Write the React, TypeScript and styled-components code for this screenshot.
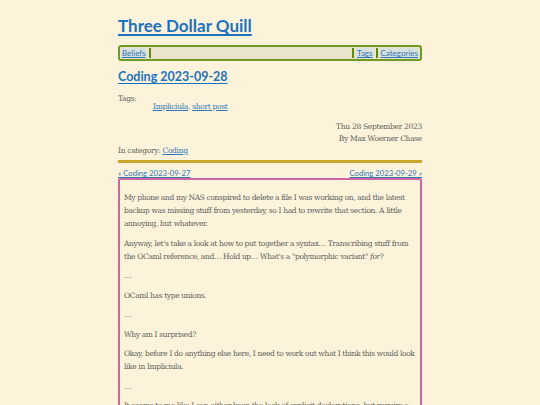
import React from "react";
import styled, { createGlobalStyle } from "styled-components";

const GlobalStyle = createGlobalStyle`
  html, body {
    margin: 0;
    padding: 0;
    background: #fcf3da;
  }
  body {
    font-family: "DejaVu Serif", serif;
    color: #5e5e5e;
  }
`;

const Page = styled.div`
  width: 304px;
  margin: 0 auto;
  padding-top: 15px;
`;

const SiteTitle = styled.a`
  display: inline-block;
  font-family: "Lato", "Open Sans", sans-serif;
  font-weight: 700;
  font-size: 17px;
  line-height: 22px;
  color: #1c72bd;
  text-decoration: underline;
  text-decoration-thickness: 1.5px;
  text-underline-offset: 2px;
`;

const Nav = styled.nav`
  margin-top: 8px;
  display: flex;
  align-items: center;
  height: 12px;
  padding: 0 1px;
  border: 2px solid #6e9c22;
  border-radius: 3px;
  background: #ebe4cc;
`;

const NavLink = styled.a`
  font-family: "Lato", sans-serif;
  font-size: 8px;
  line-height: 10px;
  padding: 0 1px;
  color: #2f76b8;
  background: #d9e1dc;
  text-decoration: underline;
`;

const NavSep = styled.span`
  width: 2px;
  height: 10px;
  margin: 0 2px;
  background: #5b8c12;
`;

const NavSpacer = styled.div`
  flex: 1;
`;

const PostTitle = styled.a`
  display: inline-block;
  margin-top: 8px;
  font-family: "Lato", "Open Sans", sans-serif;
  font-weight: 700;
  font-size: 12.5px;
  line-height: 16px;
  color: #1c72bd;
  text-decoration: underline;
  text-underline-offset: 2px;
`;

const Meta = styled.div`
  font-size: 7.5px;
  line-height: 12px;
  letter-spacing: -0.3px;
`;

const TagsLabel = styled(Meta)`
  margin-top: 10px;
  line-height: 8px;
`;

const TagsList = styled(Meta)`
  padding-left: 35px;
  line-height: 8px;
`;

const Link = styled.a`
  color: #2f76b8;
  text-decoration: underline;
`;

const Byline = styled(Meta)`
  margin-top: 10px;
  text-align: right;
`;

const Category = styled(Meta)``;

const GoldRule = styled.hr`
  margin: 3px 0 0;
  border: none;
  height: 3px;
  background: #c9a72c;
`;

const PrevNext = styled.div`
  display: flex;
  justify-content: space-between;
  margin-top: 5px;
  font-family: "Lato", sans-serif;
  font-size: 7.7px;
  line-height: 10px;
`;

const Article = styled.article`
  border: 2px solid #cc67a4;
  border-radius: 2px;
  padding: 11px 4px 0;
  font-size: 7.5px;
  line-height: 13px;
  letter-spacing: -0.36px;
`;

const Para = styled.p`
  margin: 0 0 6.5px;
`;

export default function App() {
  return (
    <>
      <GlobalStyle />
      <Page>
        <SiteTitle href="#">Three Dollar Quill</SiteTitle>
        <Nav>
          <NavLink href="#">Beliefs</NavLink>
          <NavSep />
          <NavSpacer />
          <NavSep />
          <NavLink href="#">Tags</NavLink>
          <NavSep />
          <NavLink href="#">Categories</NavLink>
        </Nav>
        <PostTitle href="#">Coding 2023-09-28</PostTitle>
        <TagsLabel>Tags:</TagsLabel>
        <TagsList>
          <Link href="#">Impliciula</Link>, <Link href="#">short post</Link>
        </TagsList>
        <Byline>
          Thu 28 September 2023
          <br />
          By Max Woerner Chase
        </Byline>
        <Category>
          In category: <Link href="#">Coding</Link>
        </Category>
        <GoldRule />
        <PrevNext>
          <Link href="#">« Coding 2023-09-27</Link>
          <Link href="#">Coding 2023-09-29 »</Link>
        </PrevNext>
        <Article>
          <Para>
            My phone and my NAS conspired to delete a file I was working on, and the latest
            backup was missing stuff from yesterday, so I had to rewrite that section. A little
            annoying, but whatever.
          </Para>
          <Para>
            Anyway, let's take a look at how to put together a syntax… Transcribing stuff from
            the OCaml reference, and… Hold up… What's a "polymorphic variant" <em>for</em>?
          </Para>
          <Para>…</Para>
          <Para>OCaml has type unions.</Para>
          <Para>…</Para>
          <Para>Why am I surprised?</Para>
          <Para>
            Okay, before I do anything else here, I need to work out what I think this would look
            like in Impliciula.
          </Para>
          <Para>…</Para>
          <Para>
            It seems to me like I can either keep the lack of explicit declarations, but require a
            lot of annotations, or I can add declarations.
          </Para>
        </Article>
      </Page>
    </>
  );
}
